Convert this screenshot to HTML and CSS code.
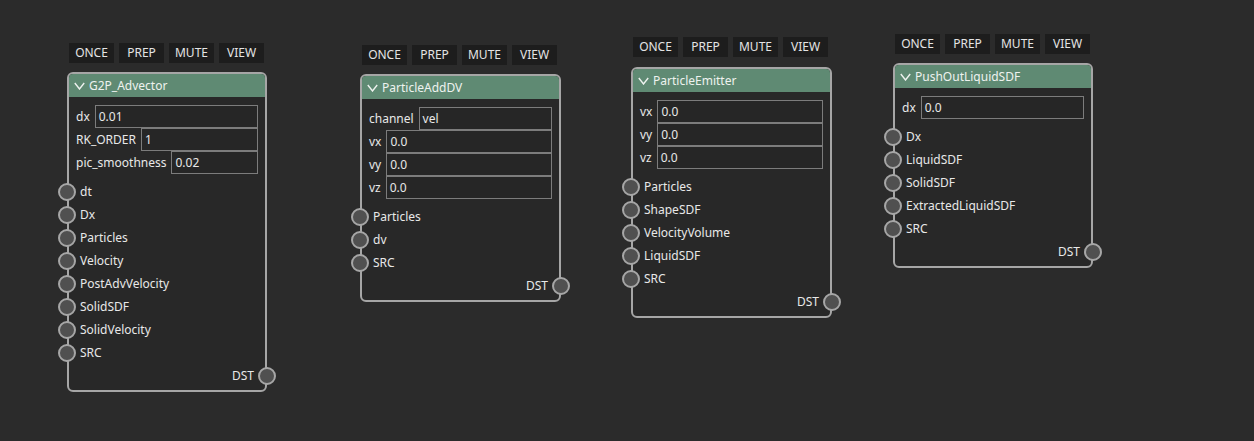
FILE: index.html
```html
<!DOCTYPE html>
<html>
<head>
<meta charset="utf-8">
<link rel="stylesheet" href="styles.css">
</head>
<body>
<div class="canvas">

  <div class="node n1">
    <div class="toolbar"><span class="btn">ONCE</span><span class="btn">PREP</span><span class="btn">MUTE</span><span class="btn">VIEW</span></div>
    <div class="card">
      <div class="header"><svg class="chev" width="11" height="8" viewBox="0 0 11 8"><polyline points="0.8,1 5.5,7 10.2,1" fill="none" stroke="#eef2ef" stroke-width="1.4"/></svg><span>G2P_Advector</span></div>
      <div class="params">
        <div class="prow"><span class="plabel">dx</span><span class="pinput">0.01</span></div>
        <div class="prow"><span class="plabel">RK_ORDER</span><span class="pinput">1</span></div>
        <div class="prow"><span class="plabel">pic_smoothness</span><span class="pinput">0.02</span></div>
      </div>
      <div class="sockets">
        <div class="sock"><span class="dot"></span><span>dt</span></div>
        <div class="sock"><span class="dot"></span><span>Dx</span></div>
        <div class="sock"><span class="dot"></span><span>Particles</span></div>
        <div class="sock"><span class="dot"></span><span>Velocity</span></div>
        <div class="sock"><span class="dot"></span><span>PostAdvVelocity</span></div>
        <div class="sock"><span class="dot"></span><span>SolidSDF</span></div>
        <div class="sock"><span class="dot"></span><span>SolidVelocity</span></div>
        <div class="sock"><span class="dot"></span><span>SRC</span></div>
      </div>
      <div class="out"><span>DST</span><span class="dot"></span></div>
    </div>
  </div>

  <div class="node n2">
    <div class="toolbar"><span class="btn">ONCE</span><span class="btn">PREP</span><span class="btn">MUTE</span><span class="btn">VIEW</span></div>
    <div class="card">
      <div class="header"><svg class="chev" width="11" height="8" viewBox="0 0 11 8"><polyline points="0.8,1 5.5,7 10.2,1" fill="none" stroke="#eef2ef" stroke-width="1.4"/></svg><span>ParticleAddDV</span></div>
      <div class="params">
        <div class="prow"><span class="plabel">channel</span><span class="pinput">vel</span></div>
        <div class="prow"><span class="plabel">vx</span><span class="pinput">0.0</span></div>
        <div class="prow"><span class="plabel">vy</span><span class="pinput">0.0</span></div>
        <div class="prow"><span class="plabel">vz</span><span class="pinput">0.0</span></div>
      </div>
      <div class="sockets">
        <div class="sock"><span class="dot"></span><span>Particles</span></div>
        <div class="sock"><span class="dot"></span><span>dv</span></div>
        <div class="sock"><span class="dot"></span><span>SRC</span></div>
      </div>
      <div class="out"><span>DST</span><span class="dot"></span></div>
    </div>
  </div>

  <div class="node n3">
    <div class="toolbar"><span class="btn">ONCE</span><span class="btn">PREP</span><span class="btn">MUTE</span><span class="btn">VIEW</span></div>
    <div class="card">
      <div class="header"><svg class="chev" width="11" height="8" viewBox="0 0 11 8"><polyline points="0.8,1 5.5,7 10.2,1" fill="none" stroke="#eef2ef" stroke-width="1.4"/></svg><span>ParticleEmitter</span></div>
      <div class="params">
        <div class="prow"><span class="plabel">vx</span><span class="pinput">0.0</span></div>
        <div class="prow"><span class="plabel">vy</span><span class="pinput">0.0</span></div>
        <div class="prow"><span class="plabel">vz</span><span class="pinput">0.0</span></div>
      </div>
      <div class="sockets">
        <div class="sock"><span class="dot"></span><span>Particles</span></div>
        <div class="sock"><span class="dot"></span><span>ShapeSDF</span></div>
        <div class="sock"><span class="dot"></span><span>VelocityVolume</span></div>
        <div class="sock"><span class="dot"></span><span>LiquidSDF</span></div>
        <div class="sock"><span class="dot"></span><span>SRC</span></div>
      </div>
      <div class="out"><span>DST</span><span class="dot"></span></div>
    </div>
  </div>

  <div class="node n4">
    <div class="toolbar"><span class="btn">ONCE</span><span class="btn">PREP</span><span class="btn">MUTE</span><span class="btn">VIEW</span></div>
    <div class="card">
      <div class="header"><svg class="chev" width="11" height="8" viewBox="0 0 11 8"><polyline points="0.8,1 5.5,7 10.2,1" fill="none" stroke="#eef2ef" stroke-width="1.4"/></svg><span>PushOutLiquidSDF</span></div>
      <div class="params">
        <div class="prow"><span class="plabel">dx</span><span class="pinput">0.0</span></div>
      </div>
      <div class="sockets">
        <div class="sock"><span class="dot"></span><span>Dx</span></div>
        <div class="sock"><span class="dot"></span><span>LiquidSDF</span></div>
        <div class="sock"><span class="dot"></span><span>SolidSDF</span></div>
        <div class="sock"><span class="dot"></span><span>ExtractedLiquidSDF</span></div>
        <div class="sock"><span class="dot"></span><span>SRC</span></div>
      </div>
      <div class="out"><span>DST</span><span class="dot"></span></div>
    </div>
  </div>

</div>
</body>
</html>
```

FILE: styles.css
```css
html, body {
  margin: 0;
  padding: 0;
  background: #2b2b2b;
}
.canvas {
  position: relative;
  width: 1254px;
  height: 441px;
  overflow: hidden;
  font-family: "Noto Sans", "Open Sans", sans-serif;
  font-size: 12px;
  color: #e8e8e8;
}
.node {
  position: absolute;
  width: 201px;
}
.n1 { left: 67px; top: 43px; width: 200px; }
.n2 { left: 360px; top: 45px; }
.n3 { left: 631px; top: 37px; }
.n3 .card { margin-top: 10px; }
.n4 { left: 893px; top: 34px; width: 200px; }

.toolbar {
  display: flex;
  gap: 5px;
  padding-left: 2px;
  height: 20px;
}
.btn {
  width: 45px;
  height: 20px;
  background: #1d1d1d;
  color: #e4e4e4;
  display: flex;
  align-items: center;
  justify-content: center;
  line-height: 1;
}
.card {
  margin-top: 9px;
  border: 2px solid #a6a6a6;
  border-radius: 6px;
  background: #282828;
  padding-bottom: 3px;
}
.header {
  height: 23px;
  background: #5f8a73;
  border-radius: 4px 4px 0 0;
  display: flex;
  align-items: center;
  padding-left: 5px;
  gap: 4px;
  color: #eef2ef;
}
.chev { display: block; margin-top: 1px; }
.params {
  padding: 8px 7px 6px 7px;
  display: flex;
  flex-direction: column;
}
.prow {
  display: flex;
  align-items: center;
  height: 23px;
  gap: 5px;
}
.plabel { white-space: nowrap; }
.pinput {
  flex: 1;
  height: 23px;
  box-sizing: border-box;
  border: 1px solid #7c7c7c;
  background: #262626;
  display: flex;
  align-items: center;
  padding-left: 3px;
  color: #e8e8e8;
}
.sockets {
  display: flex;
  flex-direction: column;
}
.sock {
  height: 23px;
  display: flex;
  align-items: center;
  gap: 4px;
  margin-left: -11px;
}
.dot {
  width: 14px;
  height: 14px;
  border-radius: 50%;
  background: #505050;
  border: 2px solid #a6a6a6;
  flex: none;
}
.out {
  height: 23px;
  display: flex;
  align-items: center;
  justify-content: flex-end;
  gap: 4px;
  margin-right: -11px;
}
```
